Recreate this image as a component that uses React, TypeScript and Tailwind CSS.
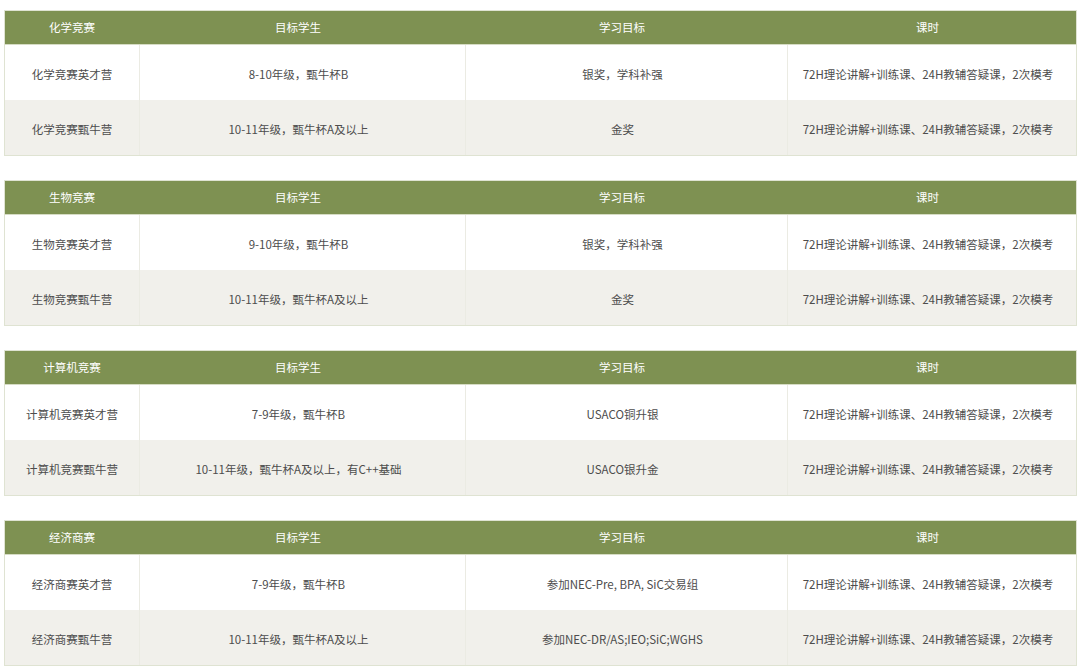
const course = "72H理论讲解+训练课、24H教辅答疑课，2次模考";

const tables = [
  {
    title: "化学竞赛",
    rows: [
      ["化学竞赛英才营", "8-10年级，甄牛杯B", "银奖，学科补强"],
      ["化学竞赛甄牛营", "10-11年级，甄牛杯A及以上", "金奖"],
    ],
  },
  {
    title: "生物竞赛",
    rows: [
      ["生物竞赛英才营", "9-10年级，甄牛杯B", "银奖，学科补强"],
      ["生物竞赛甄牛营", "10-11年级，甄牛杯A及以上", "金奖"],
    ],
  },
  {
    title: "计算机竞赛",
    rows: [
      ["计算机竞赛英才营", "7-9年级，甄牛杯B", "USACO铜升银"],
      ["计算机竞赛甄牛营", "10-11年级，甄牛杯A及以上，有C++基础", "USACO银升金"],
    ],
  },
  {
    title: "经济商赛",
    rows: [
      ["经济商赛英才营", "7-9年级，甄牛杯B", "参加NEC-Pre, BPA, SiC交易组"],
      ["经济商赛甄牛营", "10-11年级，甄牛杯A及以上", "参加NEC-DR/AS;IEO;SiC;WGHS"],
    ],
  },
];

const cols = "grid grid-cols-[134px_326px_322px_1fr]";

function CourseTable({ title, rows }: { title: string; rows: string[][] }) {
  return (
    <div className="border border-[#dfe3d2]">
      {/* header */}
      <div className={`${cols} h-[34px] bg-[#7e9152] text-white border-b border-[#d6dcc4]`}>
        {[title, "目标学生", "学习目标", "课时"].map((h, j) => (
          <div key={h} className={`flex items-center justify-center ${j > 0 ? "pr-[8px]" : ""}`}>
            {h}
          </div>
        ))}
      </div>
      {rows.map((r, i) => (
        <div
          key={i}
          className={`${cols} h-[55px] text-[#4d4d4d] ${i % 2 ? "bg-[#f1f0eb]" : "bg-white"}`}
        >
          {[...r, course].map((c, j) => (
            <div
              key={j}
              className={`flex items-center justify-center pt-[4px] ${j > 0 ? "border-l border-[#ebebe3] pr-[8px]" : ""}`}
            >
              {c}
            </div>
          ))}
        </div>
      ))}
    </div>
  );
}

export default function App() {
  return (
    <div
      className="w-[1080px] h-[668px] bg-white pt-[10px] pl-[4px] pr-[3px] flex flex-col gap-[24px] text-[11.5px] overflow-hidden"
      style={{ fontFamily: '"Noto Sans CJK SC", "Noto Sans", sans-serif' }}
    >
      {tables.map((t) => (
        <CourseTable key={t.title} title={t.title} rows={t.rows} />
      ))}
    </div>
  );
}
